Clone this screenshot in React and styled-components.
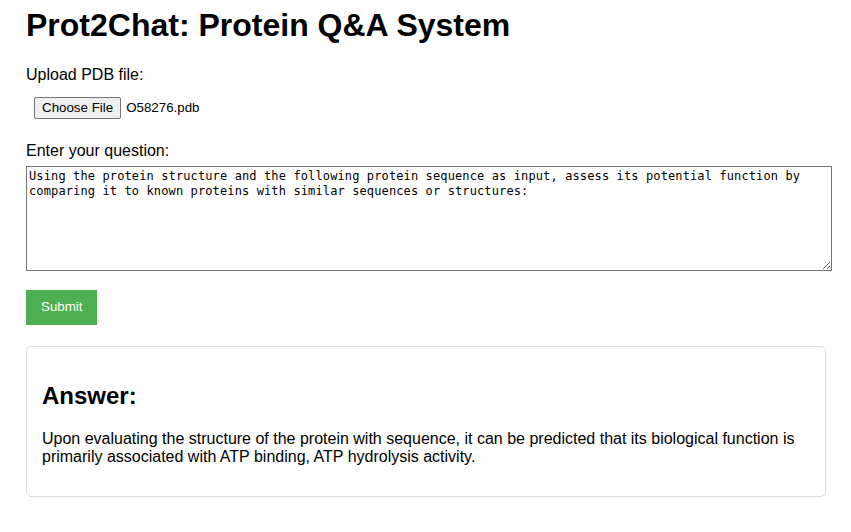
import React from "react";
import styled, { createGlobalStyle } from "styled-components";

const Global = createGlobalStyle`
  html, body { margin: 0; padding: 0; background: #fff; }
  body { font-family: "Liberation Sans", Arial, sans-serif; color: #000; }
`;

const Page = styled.div`
  width: 800px;
  padding: 7px 0 0 26px;
`;

const Title = styled.h1`
  font-size: 32px;
  font-weight: bold;
  line-height: 36.8px;
  margin: 0 0 22px;
`;

const Label = styled.label`
  display: block;
  font-size: 16px;
  line-height: 18.4px;
  margin-bottom: 6px;
`;

const FileRow = styled.div`
  display: flex;
  align-items: center;
  gap: 5px;
  padding: 7px 8px 8px;
  margin-bottom: 15px;
`;

const FileButton = styled.button`
  font-family: "Liberation Sans", Arial, sans-serif;
  font-size: 13.33px;
  line-height: 15.33px;
  padding: 2px 7px;
  background: #efefef;
  border: 1px solid #767676;
  border-radius: 2px;
  color: #000;
`;

const FileName = styled.span`
  font-size: 13.33px;
`;

const Question = styled.textarea`
  display: block;
  box-sizing: border-box;
  width: 806px;
  height: 105px;
  margin: 0 0 19.5px;
  padding: 2px;
  border: 1px solid #767676;
  font-family: "DejaVu Sans Mono", "Liberation Mono", monospace;
  font-size: 12px;
  letter-spacing: 0.12px;
  line-height: 15px;
  color: #000;
`;

const Submit = styled.button`
  display: block;
  font-family: "Liberation Sans", Arial, sans-serif;
  font-size: 13.33px;
  line-height: 14.5px;
  padding: 10px 15px;
  background: #4caf50;
  color: #fff;
  border: none;
`;

const AnswerBox = styled.div`
  margin-top: 21.5px;
  padding: 15px;
  border: 1px solid #ddd;
  border-radius: 5px;
`;

const AnswerTitle = styled.h2`
  font-size: 24px;
  font-weight: bold;
  line-height: 27.6px;
  margin: 20px 0;
`;

const AnswerText = styled.p`
  font-size: 16px;
  line-height: 18.4px;
  margin: 20px 0 14px;
`;

export default function App() {
  return (
    <>
      <Global />
      <Page>
        <Title>Prot2Chat: Protein Q&amp;A System</Title>
        <Label>Upload PDB file:</Label>
        <FileRow>
          <FileButton type="button">Choose File</FileButton>
          <FileName>O58276.pdb</FileName>
        </FileRow>
        <Label>Enter your question:</Label>
        <Question
          defaultValue="Using the protein structure and the following protein sequence as input, assess its potential function by comparing it to known proteins with similar sequences or structures:"
        />
        <Submit type="button">Submit</Submit>
        <AnswerBox>
          <AnswerTitle>Answer:</AnswerTitle>
          <AnswerText>
            Upon evaluating the structure of the protein with sequence, it can be predicted that its biological function is primarily associated with ATP binding, ATP hydrolysis activity.
          </AnswerText>
        </AnswerBox>
      </Page>
    </>
  );
}
